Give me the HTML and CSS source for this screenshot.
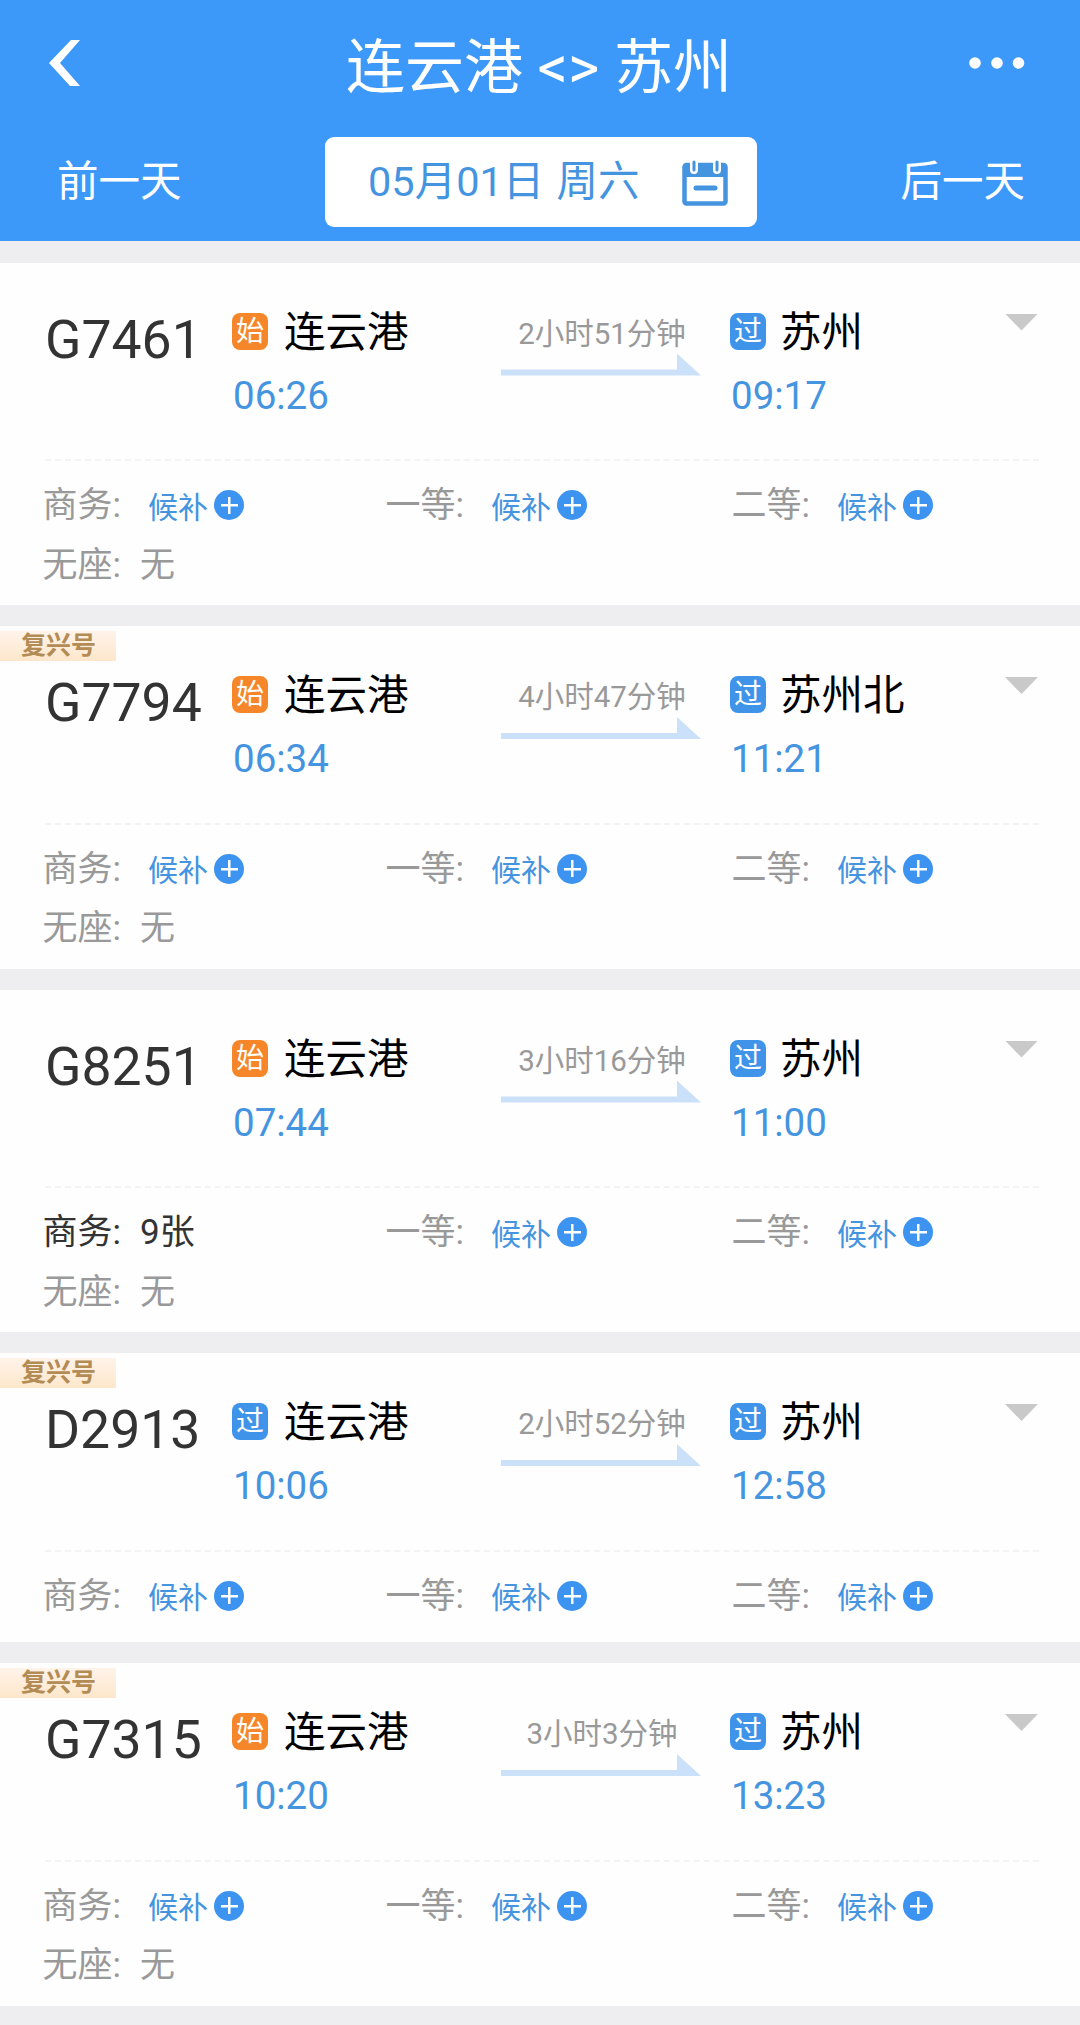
FILE: index.html
```html
<!DOCTYPE html>
<html lang="zh-CN">
<head>
  <meta charset="UTF-8">
  <meta name="viewport" content="width=device-width, initial-scale=1.0">
  <title>连云港 - 苏州</title>
  <link rel="stylesheet" href="styles.css">
</head>
<body>

<header class="header">
  <div class="title-bar">
    <svg class="back" viewBox="0 0 32 48"><path d="M31 1H22L0 24L21 47H31L11 24Z" fill="#fff"/></svg>
    <h1>连云港 <span class="swap">&lt;&gt;</span> 苏州</h1>
    <svg class="more" viewBox="0 0 56 12"><circle cx="6" cy="6" r="5.8" fill="#fff"/><circle cx="28" cy="6" r="5.8" fill="#fff"/><circle cx="49.5" cy="6" r="5.8" fill="#fff"/></svg>
  </div>
  <div class="date-bar">
    <span class="day">前一天</span>
    <div class="date-box">
      <span class="date">05月01日 周六</span>
      <svg class="calendar" viewBox="0 0 46 46">
        <rect x="2.5" y="5" width="41" height="38.5" rx="2" fill="none" stroke="#4594e0" stroke-width="4.5"/>
        <rect x="2" y="4" width="42" height="13" fill="#4594e0"/>
        <path d="M12 3V10M35 3V10" stroke="#fff" stroke-width="8" stroke-linecap="round"/>
        <path d="M12 2V10M35 2V10" stroke="#4594e0" stroke-width="3" stroke-linecap="round"/>
        <path d="M14 28H33" stroke="#4594e0" stroke-width="5" stroke-linecap="round"/>
      </svg>
    </div>
    <span class="day">后一天</span>
  </div>
</header>

<main class="list">

  <section class="card">
    <div class="info">
      <div class="train">G7461</div>
      <div class="stop">
        <div class="station"><i class="badge start">始</i><span>连云港</span></div>
        <div class="time">06:26</div>
      </div>
      <div class="duration">2小时51分钟<div class="arrow"></div></div>
      <div class="stop">
        <div class="station"><i class="badge">过</i><span>苏州</span></div>
        <div class="time">09:17</div>
      </div>
      <div class="toggle"></div>
    </div>
    <div class="seats">
      <div class="seat">商务:<span class="wait">候补<b class="plus"></b></span></div>
      <div class="seat">一等:<span class="wait">候补<b class="plus"></b></span></div>
      <div class="seat">二等:<span class="wait">候补<b class="plus"></b></span></div>
      <div class="seat">无座:<span class="count">无</span></div>
    </div>
  </section>

  <section class="card">
    <div class="tag">复兴号</div>
    <div class="info">
      <div class="train">G7794</div>
      <div class="stop">
        <div class="station"><i class="badge start">始</i><span>连云港</span></div>
        <div class="time">06:34</div>
      </div>
      <div class="duration">4小时47分钟<div class="arrow"></div></div>
      <div class="stop">
        <div class="station"><i class="badge">过</i><span>苏州北</span></div>
        <div class="time">11:21</div>
      </div>
      <div class="toggle"></div>
    </div>
    <div class="seats">
      <div class="seat">商务:<span class="wait">候补<b class="plus"></b></span></div>
      <div class="seat">一等:<span class="wait">候补<b class="plus"></b></span></div>
      <div class="seat">二等:<span class="wait">候补<b class="plus"></b></span></div>
      <div class="seat">无座:<span class="count">无</span></div>
    </div>
  </section>

  <section class="card">
    <div class="info">
      <div class="train">G8251</div>
      <div class="stop">
        <div class="station"><i class="badge start">始</i><span>连云港</span></div>
        <div class="time">07:44</div>
      </div>
      <div class="duration">3小时16分钟<div class="arrow"></div></div>
      <div class="stop">
        <div class="station"><i class="badge">过</i><span>苏州</span></div>
        <div class="time">11:00</div>
      </div>
      <div class="toggle"></div>
    </div>
    <div class="seats">
      <div class="seat available">商务:<span class="count">9张</span></div>
      <div class="seat">一等:<span class="wait">候补<b class="plus"></b></span></div>
      <div class="seat">二等:<span class="wait">候补<b class="plus"></b></span></div>
      <div class="seat">无座:<span class="count">无</span></div>
    </div>
  </section>

  <section class="card">
    <div class="tag">复兴号</div>
    <div class="info">
      <div class="train">D2913</div>
      <div class="stop">
        <div class="station"><i class="badge">过</i><span>连云港</span></div>
        <div class="time">10:06</div>
      </div>
      <div class="duration">2小时52分钟<div class="arrow"></div></div>
      <div class="stop">
        <div class="station"><i class="badge">过</i><span>苏州</span></div>
        <div class="time">12:58</div>
      </div>
      <div class="toggle"></div>
    </div>
    <div class="seats">
      <div class="seat">商务:<span class="wait">候补<b class="plus"></b></span></div>
      <div class="seat">一等:<span class="wait">候补<b class="plus"></b></span></div>
      <div class="seat">二等:<span class="wait">候补<b class="plus"></b></span></div>
    </div>
  </section>

  <section class="card">
    <div class="tag">复兴号</div>
    <div class="info">
      <div class="train">G7315</div>
      <div class="stop">
        <div class="station"><i class="badge start">始</i><span>连云港</span></div>
        <div class="time">10:20</div>
      </div>
      <div class="duration">3小时3分钟<div class="arrow"></div></div>
      <div class="stop">
        <div class="station"><i class="badge">过</i><span>苏州</span></div>
        <div class="time">13:23</div>
      </div>
      <div class="toggle"></div>
    </div>
    <div class="seats">
      <div class="seat">商务:<span class="wait">候补<b class="plus"></b></span></div>
      <div class="seat">一等:<span class="wait">候补<b class="plus"></b></span></div>
      <div class="seat">二等:<span class="wait">候补<b class="plus"></b></span></div>
      <div class="seat">无座:<span class="count">无</span></div>
    </div>
  </section>

</main>

</body>
</html>
```
FILE: styles.css
```css
* {
  box-sizing: border-box;
}

body {
  margin: 0;
  height: 2025px;
  overflow: hidden;
  background-color: #eeeef0;
  font-family: Roboto, "Noto Sans CJK SC", sans-serif;
}

/* header */
.header {
  height: 241px;
  background-color: #3c98f9;
  color: #fff;
}

.title-bar {
  display: flex;
  justify-content: space-between;
  align-items: center;
  height: 137px;
  padding: 0 55px 12px 49px;
}

.back {
  width: 32px;
  height: 48px;
}

.more {
  width: 56px;
  height: 12px;
}

h1 {
  margin: 10px 0 0 28px;
  font-size: 59px;
  line-height: 70px;
  font-weight: normal;
  white-space: pre;
}

.swap {
  font-size: 60px;
}

.date-bar {
  display: flex;
  justify-content: space-between;
  align-items: center;
  padding: 0 55px 0 57px;
}

.day {
  font-size: 41.5px;
  line-height: 88px;
}

.date-box {
  display: flex;
  align-items: center;
  justify-content: space-between;
  width: 432px;
  height: 90px;
  padding: 0 29px 0 43px;
  border-radius: 9px;
  background-color: #fff;
  color: #4594e0;
  font-size: 41.5px;
}

.date {
  padding-bottom: 9px;
  word-spacing: 2px;
}

.calendar {
  width: 46px;
  height: 46px;
  margin-top: 1px;
}

/* train list */
.list {
  display: flex;
  flex-direction: column;
  gap: 21px;
  padding-top: 21.5px;
}

.card {
  position: relative;
  min-height: 289px;
  padding-bottom: 14px;
  background-color: #fefefe;
}

.tag {
  position: absolute;
  top: 5px;
  left: 0;
  width: 116px;
  height: 30px;
  padding-left: 21px;
  background: linear-gradient(#fff3ea, #fde7cb);
  color: #b38c55;
  font-size: 25px;
  line-height: 30px;
  font-weight: 600;
}

.info {
  display: grid;
  grid-template-columns: 187px 269px 229px 275px 34px;
  height: 198.5px;
  margin: 0 41px 0 45px;
  border-bottom: 2px dashed #f3f3f3;
}

.train {
  padding-top: 46px;
  font-size: 53.5px;
  line-height: 62px;
  color: #333;
}

.station {
  display: flex;
  align-items: center;
  height: 50px;
  margin-top: 43.5px;
  font-size: 41.5px;
  line-height: 50px;
  color: #000;
}

.station span {
  padding-top: 3px;
}

.stop + .duration + .stop .badge {
  margin-right: 14px;
}

.badge {
  width: 36px;
  height: 37px;
  margin-right: 16px;
  border-radius: 8px;
  background-color: #3f94ea;
  color: #fff;
  font-size: 28px;
  line-height: 37px;
  font-style: normal;
  text-align: center;
}

.badge.start {
  background-color: #f5872a;
}

.time {
  margin: 16.5px 0 0 1px;
  font-size: 38.5px;
  line-height: 46px;
  color: #4594e0;
}

.duration {
  width: 202px;
  padding-top: 51px;
  font-size: 29.5px;
  line-height: 40px;
  color: #999;
  text-align: center;
}

/* thin line with half an arrow head on top */
.arrow {
  width: 200px;
  height: 22px;
  background-color: #cbe1fa;
  clip-path: polygon(0 16px, 176px 16px, 176px 0, 100% 22px, 0 22px);
}

.toggle {
  width: 33px;
  height: 17px;
  margin-top: 51px;
  background-color: #c9c9c9;
  clip-path: polygon(0 0, 100% 0, 50% 100%);
}

.seats {
  display: grid;
  grid-template-columns: 343px 346px 1fr;
  grid-auto-rows: 59.5px;
  padding: 11px 0 0 42.5px;
}

.seat {
  display: flex;
  align-items: center;
  font-size: 35px;
  color: #999;
}

.available {
  color: #333;
}

.wait {
  display: flex;
  align-items: center;
  margin: 6px 0 0 27px;
  font-size: 30px;
  color: #4594e0;
}

.count {
  margin-left: 19px;
}

.plus {
  width: 30px;
  height: 30px;
  margin: 1px 0 0 6.5px;
  border-radius: 50%;
  background:
    linear-gradient(#fff, #fff) center / 17px 2.5px no-repeat,
    linear-gradient(#fff, #fff) center / 2.5px 17px no-repeat,
    #3c94f0;
}
```
